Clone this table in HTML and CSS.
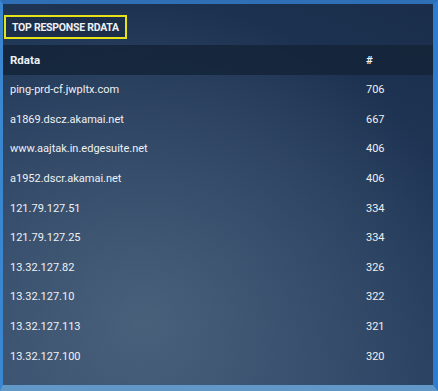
FILE: index.html
```html
<!DOCTYPE html>
<html>
<head>
<meta charset="utf-8">
<link rel="stylesheet" href="styles.css">
</head>
<body>
<div class="frame">
  <div class="panel">
    <div class="title-wrap"><div class="title">TOP RESPONSE RDATA</div></div>
    <div class="table">
      <div class="row head"><span class="c1">Rdata</span><span class="c2">#</span></div>
      <div class="row"><span class="c1">ping-prd-cf.jwpltx.com</span><span class="c2">706</span></div>
      <div class="row"><span class="c1">a1869.dscz.akamai.net</span><span class="c2">667</span></div>
      <div class="row"><span class="c1">www.aajtak.in.edgesuite.net</span><span class="c2">406</span></div>
      <div class="row"><span class="c1">a1952.dscr.akamai.net</span><span class="c2">406</span></div>
      <div class="row"><span class="c1">121.79.127.51</span><span class="c2">334</span></div>
      <div class="row"><span class="c1">121.79.127.25</span><span class="c2">334</span></div>
      <div class="row"><span class="c1">13.32.127.82</span><span class="c2">326</span></div>
      <div class="row"><span class="c1">13.32.127.10</span><span class="c2">322</span></div>
      <div class="row"><span class="c1">13.32.127.113</span><span class="c2">321</span></div>
      <div class="row"><span class="c1">13.32.127.100</span><span class="c2">320</span></div>
    </div>
  </div>
</div>
</body>
</html>
```
FILE: styles.css
```css
html, body {
  margin: 0;
  padding: 0;
  background: #3b7fc4;
}
body {
  width: 438px;
  height: 391px;
  overflow: hidden;
  font-family: Roboto, "Liberation Sans", sans-serif;
  color: #e6eaef;
}
.frame {
  box-sizing: border-box;
  width: 438px;
  height: 391px;
  border-style: solid;
  border-width: 4px 5px 6px 3px;
  border-color: #2e6fb6 #2d7cd0 #6298c8 #3a86d0;
}
.panel {
  box-sizing: border-box;
  height: 100%;
  padding-top: 11px;
  background:
    radial-gradient(ellipse 340px 320px at 140px 320px, rgba(74, 98, 124, 0.95), rgba(74, 98, 124, 0) 100%),
    linear-gradient(200deg, #1a2e4b 0%, #22395a 50%, #2e4666 100%);
}
.title-wrap {
  display: flex;
  padding-left: 1px;
}
.title {
  box-sizing: border-box;
  height: 24px;
  border: 2px solid #e6e21a;
  padding: 0 6px 0 6px;
  display: flex;
  align-items: center;
  font-size: 10.5px;
  font-weight: 700;
  color: #eef1f4;
  background: #1b2f4b;
  letter-spacing: -0.25px;
}
.table {
  margin-top: 6px;
}
.row {
  display: flex;
  align-items: center;
  height: 29.6px;
  font-size: 11px;
  font-weight: 400;
  color: #eef1f5;
}
.row.head {
  height: 30px;
  background: rgba(20, 36, 56, 0.85);
  font-weight: 700;
  font-size: 11.5px;
}
.c1 {
  width: 363px;
  padding-left: 7px;
  box-sizing: border-box;
}
.c2 {
  flex: 1;
}
```
